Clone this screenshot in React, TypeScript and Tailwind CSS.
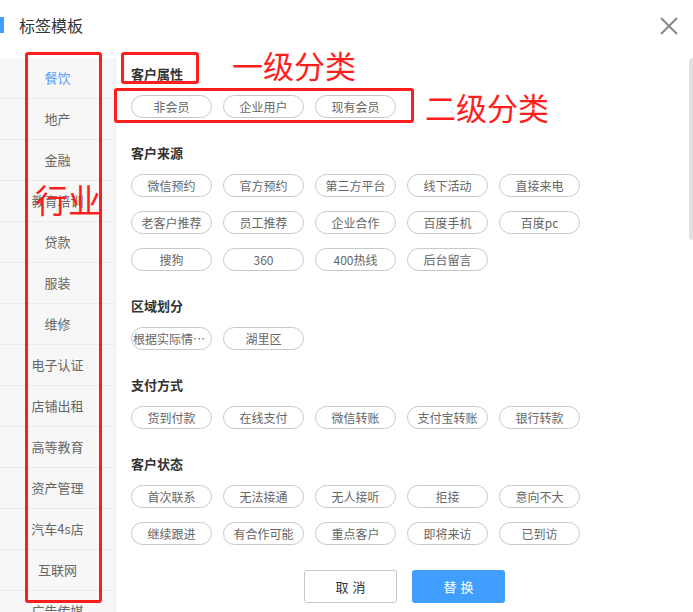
const industries = [
  "餐饮",
  "地产",
  "金融",
  "教育培训",
  "贷款",
  "服装",
  "维修",
  "电子认证",
  "店铺出租",
  "高等教育",
  "资产管理",
  "汽车4s店",
  "互联网",
  "广告传媒",
];

const groups: { title: string; tags: string[] }[] = [
  { title: "客户属性", tags: ["非会员", "企业用户", "现有会员"] },
  {
    title: "客户来源",
    tags: [
      "微信预约",
      "官方预约",
      "第三方平台",
      "线下活动",
      "直接来电",
      "老客户推荐",
      "员工推荐",
      "企业合作",
      "百度手机",
      "百度pc",
      "搜狗",
      "360",
      "400热线",
      "后台留言",
    ],
  },
  { title: "区域划分", tags: ["根据实际情况填写", "湖里区"] },
  { title: "支付方式", tags: ["货到付款", "在线支付", "微信转账", "支付宝转账", "银行转款"] },
  {
    title: "客户状态",
    tags: [
      "首次联系",
      "无法接通",
      "无人接听",
      "拒接",
      "意向不大",
      "继续跟进",
      "有合作可能",
      "重点客户",
      "即将来访",
      "已到访",
    ],
  },
];

function Tag({ label }: { label: string }) {
  return (
    <span className="w-[81px] h-[23px] rounded-full border border-[#c8c8c8] text-[12px] leading-[21px] text-[#666] text-center whitespace-nowrap overflow-hidden text-ellipsis px-px">
      {label}
    </span>
  );
}

export default function App() {
  return (
    <div
      className="relative w-[693px] h-[612px] overflow-hidden bg-white"
      style={{ fontFamily: '"Noto Sans CJK SC", "Noto Sans", sans-serif' }}
    >
      {/* header */}
      <div className="h-[58px] flex items-center justify-between">
        <div className="flex items-center h-4 -mt-[8px]">
          <span className="w-1 h-4 bg-[#409eff]" />
          <span className="ml-[15px] text-[16px] text-[#333]">标签模板</span>
        </div>
        <svg width="20" height="20" viewBox="0 0 20 20" className="mr-[14px] -mt-[6px]">
          <path d="M2 2 L18 18 M18 2 L2 18" stroke="#888" strokeWidth="2" fill="none" />
        </svg>
      </div>

      <div className="flex">
        {/* industry list */}
        <div className="w-[116px] shrink-0 bg-[#f7f7f7] border-r border-[#ebebeb]">
          {industries.map((name, i) => (
            <div
              key={name}
              className={`h-[41px] flex items-center justify-center text-[13px] border-b border-[#ebebeb] ${
                i === 0 ? "text-[#5a9cf8]" : "text-[#666]"
              }`}
            >
              {name}
            </div>
          ))}
        </div>

        {/* tag groups */}
        <div className="flex-1 pl-[15px] pt-[6px]">
          {groups.map((g) => (
            <div key={g.title} className="mb-[25px]">
              <div className="h-5 leading-5 text-[13px] font-bold text-[#333]">{g.title}</div>
              <div className="mt-[11px] flex flex-wrap gap-x-[11px] gap-y-[14px] w-[460px]">
                {g.tags.map((t) => (
                  <Tag key={t} label={t} />
                ))}
              </div>
            </div>
          ))}
          <div className="flex justify-center gap-[15px] mt-[2px] pr-[15px]">
            <button className="w-[93px] h-[33px] rounded-[3px] border border-[#c8c8c8] text-[13px] text-[#333] tracking-[4px] pl-1">
              取消
            </button>
            <button className="w-[93px] h-[33px] rounded-[3px] bg-[#409eff] text-[13px] text-white tracking-[4px] pl-1">
              替换
            </button>
          </div>
        </div>
      </div>

      {/* scrollbar */}
      <div className="absolute right-0 top-[58px] w-1 h-[182px] rounded-l-sm bg-[#e0e0e0]" />

      {/* red annotations */}
      <div className="absolute left-[25px] top-[52px] w-[77px] h-[551px] border-[3px] border-[#ff1e1e] rounded-[3px]" />
      <div className="absolute left-[35px] top-[178px] text-[33px] leading-[42px] text-[#ff1e1e]">行业</div>
      <div className="absolute left-[121px] top-[52px] w-[78px] h-[32px] border-[3px] border-[#ff1e1e] rounded-[3px]" />
      <div className="absolute left-[232px] top-[45px] text-[31px] leading-[40px] text-[#ff1e1e]">一级分类</div>
      <div className="absolute left-[114px] top-[88px] w-[300px] h-[35px] border-[3px] border-[#ff1e1e] rounded-[3px]" />
      <div className="absolute left-[425px] top-[87px] text-[31px] leading-[40px] text-[#ff1e1e]">二级分类</div>
    </div>
  );
}
